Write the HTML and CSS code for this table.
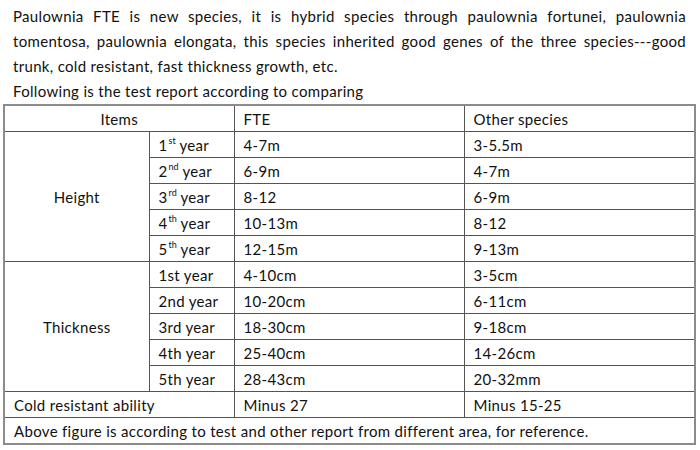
FILE: index.html
```html
<!DOCTYPE html>
<html>
<head>
<meta charset="utf-8">
<link rel="stylesheet" href="styles.css">
</head>
<body>
<div class="intro">
  <span class="line just">Paulownia FTE is new species, it is hybrid species through paulownia fortunei, paulownia</span>
  <span class="line just">tomentosa, paulownia elongata, this species inherited good genes of the three species---good</span>
  <span class="line">trunk, cold resistant, fast thickness growth, etc.</span>
  <span class="line">Following is the test report according to comparing</span>
</div>
<table class="report">
  <colgroup>
    <col class="c1"><col class="c2"><col class="c3"><col class="c4">
  </colgroup>
  <tr><td colspan="2" class="center">Items</td><td>FTE</td><td>Other species</td></tr>
  <tr><td rowspan="5" class="center">Height</td><td>1<sup class="ord">st</sup> year</td><td>4-7m</td><td>3-5.5m</td></tr>
  <tr><td>2<sup class="ord">nd</sup> year</td><td>6-9m</td><td>4-7m</td></tr>
  <tr><td>3<sup class="ord">rd</sup> year</td><td>8-12</td><td>6-9m</td></tr>
  <tr><td>4<sup class="ord">th</sup> year</td><td>10-13m</td><td>8-12</td></tr>
  <tr><td>5<sup class="ord">th</sup> year</td><td>12-15m</td><td>9-13m</td></tr>
  <tr><td rowspan="5" class="center">Thickness</td><td>1st year</td><td>4-10cm</td><td>3-5cm</td></tr>
  <tr><td>2nd year</td><td>10-20cm</td><td>6-11cm</td></tr>
  <tr><td>3rd year</td><td>18-30cm</td><td>9-18cm</td></tr>
  <tr><td>4th year</td><td>25-40cm</td><td>14-26cm</td></tr>
  <tr><td>5th year</td><td>28-43cm</td><td>20-32mm</td></tr>
  <tr><td colspan="2">Cold resistant ability</td><td>Minus 27</td><td>Minus 15-25</td></tr>
  <tr><td colspan="4">Above figure is according to test and other report from different area, for reference.</td></tr>
</table>
</body>
</html>
```

FILE: styles.css
```css
html, body {
  margin: 0;
  padding: 0;
  background: #ffffff;
}
body {
  padding: 4px 6px 0 3px;
  font-family: Lato, "Open Sans", sans-serif;
  font-size: 15px;
  letter-spacing: 0.32px;
  color: #111111;
}
.intro {
  padding: 0 8px 0 10px;
}
.line {
  display: block;
  line-height: 25px;
  height: 25px;
  white-space: nowrap;
}
.line.just {
  white-space: normal;
  text-align: justify;
  text-align-last: justify;
}
.report {
  border-collapse: collapse;
  width: 691px;
  table-layout: fixed;
  border: 2px solid #8c8c8c;
}
.c1 { width: 145px; }
.c2 { width: 85px; }
.c3 { width: 230px; }
.c4 { width: 231px; }
.report td {
  border: 1px solid #555555;
  height: 25px;
  padding: 0 0 0 9px;
  line-height: 20px;
  white-space: nowrap;
  vertical-align: middle;
}
.report td.center {
  text-align: center;
  padding-left: 0;
}
.ord {
  font-size: 9px;
  line-height: 0;
  vertical-align: 7px;
  margin-left: 1px;
  letter-spacing: 0;
}
```
